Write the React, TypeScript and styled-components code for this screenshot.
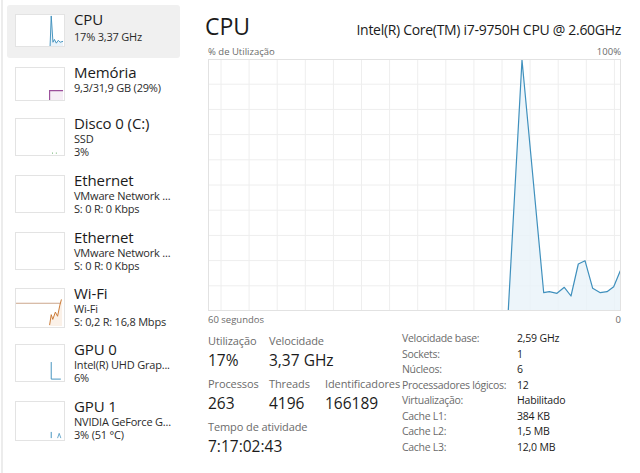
import React from "react";
import styled, { createGlobalStyle } from "styled-components";

const Global = createGlobalStyle`
  html, body { margin: 0; padding: 0; background: #ffffff; }
  body { font-family: "Open Sans", "Noto Sans", sans-serif; color: #1b1b1b; }
  * { box-sizing: border-box; }
`;

const Frame = styled.div`
  display: flex;
  width: 640px;
  height: 473px;
  overflow: hidden;
  background: #fff;
`;

const Sidebar = styled.nav`
  width: 188px;
  flex: none;
  margin-left: 1px;
  border-left: 2px solid #ececec;
  padding: 5px 0 0 4px;
  display: flex;
  flex-direction: column;
`;

const Item = styled.div<{ $h: number; $selected?: boolean }>`
  display: flex;
  align-items: flex-start;
  gap: 9px;
  width: 173px;
  height: ${(p) => p.$h}px;
  padding: 6px 0 0 8px;
  border-radius: 3px;
  background: ${(p) => (p.$selected ? "#f0f0f0" : "transparent")};
`;

const Thumb = styled.svg<{ $h: number }>`
  flex: none;
  width: 50px;
  height: ${(p) => p.$h}px;
  margin-top: 3px;
  background: #fff;
  border: 1px solid #e3e3e3;
  display: block;
`;

const ItemText = styled.div`
  display: flex;
  flex-direction: column;
  min-width: 0;
`;

const ItemTitle = styled.div<{ $gap: number }>`
  font-size: 15px;
  line-height: 17px;
  margin-bottom: ${(p) => p.$gap}px;
  color: #1b1b1b;
  white-space: nowrap;
  letter-spacing: -0.1px;
`;

const ItemSub = styled.div`
  font-size: 11px;
  line-height: 13px;
  color: #2b2b2b;
  white-space: nowrap;
  letter-spacing: -0.2px;
`;

const Main = styled.main`
  flex: 1;
  padding: 11px 20px 0 19px;
  display: flex;
  flex-direction: column;
`;

const Header = styled.div`
  display: flex;
  align-items: baseline;
  justify-content: space-between;
`;

const BigTitle = styled.h1`
  margin: 0 0 0 -3px;
  font-weight: 400;
  font-size: 23px;
  line-height: 30px;
  color: #1b1b1b;
`;

const CpuName = styled.div`
  font-size: 14px;
  letter-spacing: -0.3px;
  color: #1b1b1b;
  white-space: nowrap;
`;

const AxisRow = styled.div<{ $mt: number }>`
  display: flex;
  justify-content: space-between;
  font-size: 9.5px;
  line-height: 13px;
  color: #6b6b6b;
  margin-top: ${(p) => p.$mt}px;
`;

const Chart = styled.svg`
  display: block;
  width: 413px;
  height: 252px;
  margin-top: 1px;
`;

const Stats = styled.div`
  display: flex;
  margin-top: 8px;
`;

const LeftStats = styled.div`
  width: 194px;
  flex: none;
  display: grid;
  grid-template-columns: 61px 56px auto;
  row-gap: 5px;
  align-content: start;
`;

const StatBlock = styled.div<{ $span?: number }>`
  display: flex;
  flex-direction: column;
  grid-column: span ${(p) => p.$span ?? 1};
  white-space: nowrap;
`;

const StatLabel = styled.div`
  font-size: 11px;
  line-height: 14px;
  color: #6b6b6b;
  letter-spacing: -0.1px;
`;

const StatValue = styled.div`
  font-size: 15.5px;
  line-height: 24px;
  color: #1b1b1b;
`;

const InfoTable = styled.div`
  display: grid;
  grid-template-columns: 115px auto;
  margin-top: -3px;
  align-content: start;
`;

const InfoLabel = styled.div`
  font-size: 10.5px;
  line-height: 15.5px;
  letter-spacing: -0.3px;
  color: #6b6b6b;
  white-space: nowrap;
`;

const InfoValue = styled.div`
  font-size: 10.5px;
  line-height: 15.5px;
  letter-spacing: -0.2px;
  color: #1b1b1b;
  white-space: nowrap;
`;

const BLUE = "#3f90bd";

type Side = {
  title: string;
  lines: string[];
  h: number;
  th: number;
  gap: number;
  selected?: boolean;
  draw?: React.ReactNode;
};

const sideItems: Side[] = [
  {
    title: "CPU",
    lines: ["17% 3,37 GHz"],
    h: 53,
    th: 33,
    gap: 2,
    selected: true,
    draw: (
      <>
        <polygon
          points="35.5,33 36.7,1 38.5,29 40,26 42,30 44,27 46,29 49,28 49,33"
          fill="#eaf3fa"
        />
        <polyline
          points="35.5,33 36.7,1 38.5,29 40,26 42,30 44,27 46,29 49,28"
          fill="none"
          stroke={BLUE}
          strokeWidth="1"
        />
      </>
    ),
  },
  {
    title: "Memória",
    lines: ["9,3/31,9 GB (29%)"],
    h: 51,
    th: 34,
    gap: 0,
    draw: (
      <>
        <rect x="35" y="24" width="14" height="10" fill="#f6eef6" />
        <polyline points="35,34 35,24 49,24" fill="none" stroke="#9b4f9b" strokeWidth="1.2" />
      </>
    ),
  },
  {
    title: "Disco 0 (C:)",
    lines: ["SSD", "3%"],
    h: 57,
    th: 38,
    gap: 0,
    draw: (
      <>
        <rect x="37.5" y="35.5" width="1" height="1" fill="#5aa85a" />
        <rect x="41.5" y="35.5" width="1" height="1" fill="#5aa85a" />
      </>
    ),
  },
  { title: "Ethernet", lines: ["VMware Network ...", "S: 0 R: 0 Kbps"], h: 57, th: 38, gap: 0 },
  { title: "Ethernet", lines: ["VMware Network ...", "S: 0 R: 0 Kbps"], h: 56, th: 38, gap: 0 },
  {
    title: "Wi-Fi",
    lines: ["Wi-Fi", "S: 0,2 R: 16,8 Mbps"],
    h: 56,
    th: 40,
    gap: 0,
    draw: (
      <>
        <line x1="0" y1="15" x2="48" y2="15" stroke="#c9a386" strokeWidth="1" />
        <polygon
          points="35,39 36.7,27 38.3,32 41,24.3 43.3,28.7 45.7,17 47.3,11 48,11 48,39"
          fill="#fbf1e8"
        />
        <polyline
          points="35,38 36.7,27 38.3,32 41,24.3 43.3,28.7 45.7,17 47.3,11"
          fill="none"
          stroke="#c8762f"
          strokeWidth="1"
        />
      </>
    ),
  },
  {
    title: "GPU 0",
    lines: ["Intel(R) UHD Grap...", "6%"],
    h: 57,
    th: 38,
    gap: 0,
    draw: (
      <polyline points="36.7,18 36.7,36 46.7,36" fill="none" stroke={BLUE} strokeWidth="1" />
    ),
  },
  {
    title: "GPU 1",
    lines: ["NVIDIA GeForce G...", "3% (51 °C)"],
    h: 57,
    th: 40,
    gap: 0,
    draw: (
      <>
        <line x1="36.7" y1="31.5" x2="36.7" y2="38" stroke={BLUE} strokeWidth="1" />
        <polyline points="43.3,38 45,33 46.7,38" fill="none" stroke={BLUE} strokeWidth="0.8" />
      </>
    ),
  },
];

const W = 413;
const H = 252;
const vLines = Array.from({ length: 15 }, (_, i) => 13 + 28.1 * i);
const hLines = Array.from({ length: 9 }, (_, i) => 25.2 * (i + 1));
const pts: [number, number][] = [
  [300.3, 251],
  [314, 1],
  [335.7, 233.7],
  [341.3, 232.7],
  [349, 234.3],
  [356.3, 228.3],
  [363, 237],
  [370.3, 205],
  [377, 201.7],
  [384.7, 229.3],
  [392.3, 233.7],
  [399, 232.7],
  [405.7, 227.7],
  [412.3, 211.7],
];
const linePts = pts.map((p) => p.join(",")).join(" ");
const fillPts = linePts + " 412.3,251";

const info: [string, string][] = [
  ["Velocidade base:", "2,59 GHz"],
  ["Sockets:", "1"],
  ["Núcleos:", "6"],
  ["Processadores lógicos:", "12"],
  ["Virtualização:", "Habilitado"],
  ["Cache L1:", "384 KB"],
  ["Cache L2:", "1,5 MB"],
  ["Cache L3:", "12,0 MB"],
];

export default function App() {
  return (
    <>
      <Global />
      <Frame>
        <Sidebar>
          {sideItems.map((it, i) => (
            <Item key={i} $h={it.h} $selected={it.selected}>
              <Thumb $h={it.th} viewBox={`0 0 50 ${it.th}`} preserveAspectRatio="none">
                {it.draw}
              </Thumb>
              <ItemText>
                <ItemTitle $gap={it.gap}>{it.title}</ItemTitle>
                {it.lines.map((l, j) => (
                  <ItemSub key={j}>{l}</ItemSub>
                ))}
              </ItemText>
            </Item>
          ))}
        </Sidebar>
        <Main>
          <Header>
            <BigTitle>CPU</BigTitle>
            <CpuName>Intel(R) Core(TM) i7-9750H CPU @ 2.60GHz</CpuName>
          </Header>
          <AxisRow $mt={4}>
            <span>% de Utilização</span>
            <span>100%</span>
          </AxisRow>
          <Chart viewBox={`0 0 ${W} ${H}`}>
            {vLines.map((x, i) => (
              <line key={"v" + i} x1={x} y1={0} x2={x} y2={H} stroke="#eeeeee" strokeWidth="1" />
            ))}
            {hLines.map((y, i) => (
              <line key={"h" + i} x1={0} y1={y} x2={W} y2={y} stroke="#eeeeee" strokeWidth="1" />
            ))}
            <polygon points={fillPts} fill="#e9f2f9" fillOpacity="0.8" />
            <polyline points={linePts} fill="none" stroke={BLUE} strokeWidth="1.2" strokeLinejoin="round" />
            <rect x="0.5" y="0.5" width={W - 1} height={H - 1} fill="none" stroke="#e2e2e2" strokeWidth="1" />
          </Chart>
          <AxisRow $mt={2}>
            <span>60 segundos</span>
            <span>0</span>
          </AxisRow>
          <Stats>
            <LeftStats>
              <StatBlock>
                <StatLabel>Utilização</StatLabel>
                <StatValue>17%</StatValue>
              </StatBlock>
              <StatBlock $span={2}>
                <StatLabel>Velocidade</StatLabel>
                <StatValue>3,37 GHz</StatValue>
              </StatBlock>
              <StatBlock>
                <StatLabel>Processos</StatLabel>
                <StatValue>263</StatValue>
              </StatBlock>
              <StatBlock>
                <StatLabel>Threads</StatLabel>
                <StatValue>4196</StatValue>
              </StatBlock>
              <StatBlock>
                <StatLabel>Identificadores</StatLabel>
                <StatValue>166189</StatValue>
              </StatBlock>
              <StatBlock $span={3}>
                <StatLabel>Tempo de atividade</StatLabel>
                <StatValue>7:17:02:43</StatValue>
              </StatBlock>
            </LeftStats>
            <InfoTable>
              {info.map(([k, v]) => (
                <React.Fragment key={k}>
                  <InfoLabel>{k}</InfoLabel>
                  <InfoValue>{v}</InfoValue>
                </React.Fragment>
              ))}
            </InfoTable>
          </Stats>
        </Main>
      </Frame>
    </>
  );
}
